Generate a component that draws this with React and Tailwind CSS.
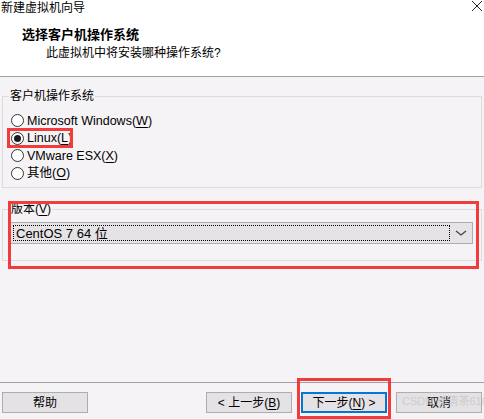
import React from 'react';

const font = { fontFamily: '"Liberation Sans", "Noto Sans CJK SC", sans-serif' };

// radio circle with optional dot
const Radio = ({ checked }) => (
  <span className="w-[13px] h-[13px] rounded-full border border-[#333] bg-white flex items-center justify-center shrink-0">
    {checked && <span className="w-[7px] h-[7px] rounded-full bg-[#1a1a1a]" />}
  </span>
);

const U = ({ children }) => <span className="underline underline-offset-2">{children}</span>;

const options = [
  { label: 'Microsoft Windows', key: 'W' },
  { label: 'Linux', key: 'L', checked: true },
  { label: 'VMware ESX', key: 'X' },
  { label: '其他', key: 'O' },
];

const Button = ({ children, primary }) => (
  <button
    className={
      'h-[21px] w-[86px] bg-[#e5e2e5] text-[12px] text-black flex items-center justify-center ' +
      (primary ? 'border-2 border-[#0078d7]' : 'border border-[#adadad]')
    }
  >
    {children}
  </button>
);

export default function App() {
  return (
    <div className="w-[484px] h-[419px] bg-[#f6f3f6] flex flex-col relative overflow-hidden text-black" style={font}>
      {/* header */}
      <div className="h-[77px] bg-white border-b border-[#a0a0a0] flex flex-col shrink-0">
        <div className="h-[16px] flex items-center justify-between pl-[1px] pr-[1px]">
          <span className="text-[12px] leading-none">新建虚拟机向导</span>
          <svg width="12" height="12" viewBox="0 0 12 12" className="mt-[-4px]">
            <path d="M1 1 L11 11 M11 1 L1 11" stroke="#222" strokeWidth="1" />
          </svg>
        </div>
        <div className="pl-[22px] pt-[12px] text-[13px] font-bold leading-none">选择客户机操作系统</div>
        <div className="pl-[46px] pt-[6px] text-[12px] leading-none">此虚拟机中将安装哪种操作系统?</div>
      </div>

      {/* body */}
      <div className="flex-1 flex flex-col px-[2px] pt-[13px]">
        <fieldset className="border border-[#dcdcdc] h-[98px] pl-[8px]">
          <legend className="text-[12px] px-[1px] ml-[-2px] leading-none">客户机操作系统</legend>
          <div className="flex flex-col gap-[4px] pt-[12px]">
            {options.map((o) => (
              <div key={o.key} className="flex items-center gap-[3px] h-[13.5px] text-[12.5px] leading-none">
                <Radio checked={o.checked} />
                <span>
                  {o.label}(<U>{o.key}</U>)
                </span>
              </div>
            ))}
          </div>
        </fieldset>

        <fieldset className="border border-[#dcdcdc] h-[58px] mt-[15px] pl-[7px] pr-[8px]">
          <legend className="text-[12px] px-[1px] leading-none">
            版本(<U>V</U>)
          </legend>
          <div className="mt-[7px] h-[22px] bg-[#e6e3e6] border border-[#adadad] flex items-center pl-[2px] pr-[2px]">
            <div className="flex-1 h-[16px] border border-dotted border-black flex items-center pl-[2px] text-[13px] leading-none">
              CentOS 7 64 位
            </div>
            <svg width="18" height="10" viewBox="0 0 18 10" className="ml-[2px]">
              <path d="M4 3 L9 7 L14 3" stroke="#444" strokeWidth="1.3" fill="none" />
            </svg>
          </div>
        </fieldset>
      </div>

      {/* footer */}
      <div className="h-[37px] border-t border-[#a0a0a0] shrink-0 flex items-start pt-[9px] pl-[2px] pr-[2px]">
        <Button>帮助</Button>
        <div className="flex-1" />
        <Button>
          &lt; 上一步(<U>B</U>)
        </Button>
        <div className="w-[9px]" />
        <Button primary>
          下一步(<U>N</U>) &gt;
        </Button>
        <div className="w-[9px]" />
        <div className="relative">
          <Button>取消</Button>
          <span className="absolute left-[6px] top-[4px] text-[11px] leading-none text-[#c8c8c8] opacity-80 whitespace-nowrap pointer-events-none">
            CSDN @清茶610
          </span>
        </div>
      </div>

      {/* red annotation boxes */}
      <div className="absolute left-[7px] top-[128px] w-[66px] h-[20px] border-[3px] border-[#f03c3c] pointer-events-none" />
      <div className="absolute left-[8px] top-[201px] w-[471px] h-[68px] border-[3px] border-[#f03c3c] pointer-events-none" />
      <div className="absolute left-[297px] top-[378px] w-[94px] h-[41px] border-[3px] border-[#f03c3c] pointer-events-none" />
    </div>
  );
}
